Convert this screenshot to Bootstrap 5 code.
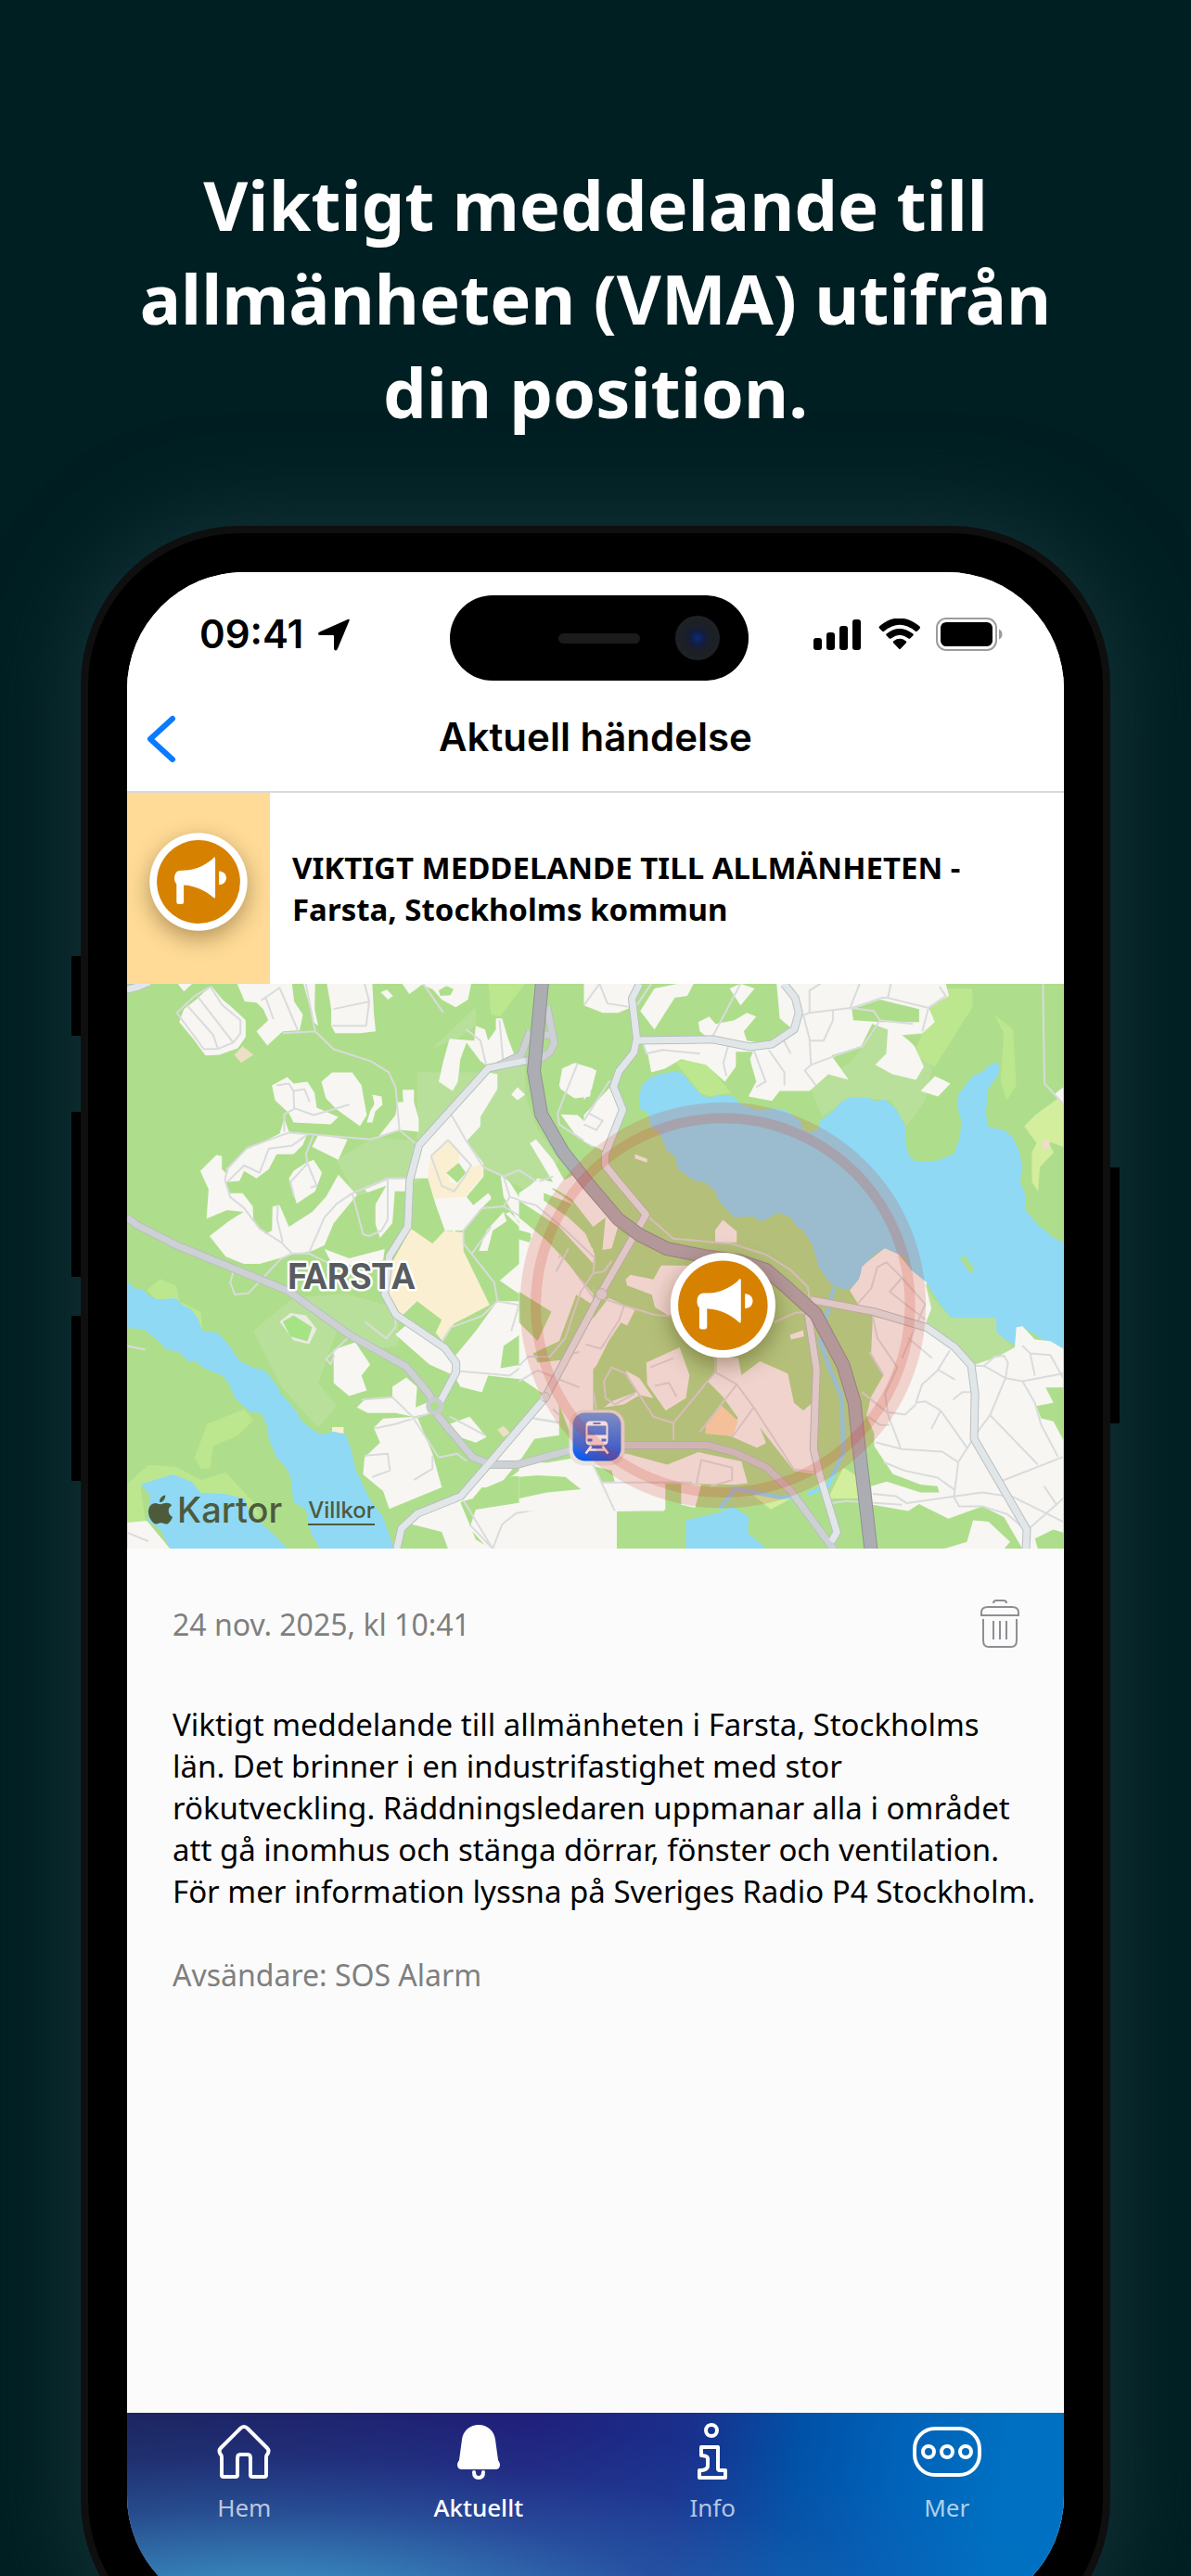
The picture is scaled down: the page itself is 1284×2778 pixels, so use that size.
<!DOCTYPE html>
<html lang="sv">
<head>
<meta charset="utf-8">
<meta name="viewport" content="width=device-width, initial-scale=1">
<title>Aktuell händelse</title>
<link href="https://cdn.jsdelivr.net/npm/bootstrap@5.3.0/dist/css/bootstrap.min.css" rel="stylesheet">
<style>
  body { background: #001f22; font-family: "Noto Sans", "Open Sans", sans-serif; color: #000; }
  .stage { min-height: 100vh; padding: 170px 87px 0; }
  .headline { font-size: 74px; line-height: 101px; font-weight: 700; margin-bottom: 94px; }
  .phone { background: #000; border: 8px solid #0f0f0f; border-radius: 172px; padding: 42px; margin-bottom: -90px; box-shadow: 0 0 90px 16px #123135; }
  .side-key { background: #000; width: 10px; }
  .key-a { left: -18px; top: 456px; height: 86px; }
  .key-b { left: -18px; top: 624px; height: 178px; }
  .key-c { left: -18px; top: 844px; height: 178px; }
  .key-d { right: -18px; top: 684px; height: 276px; }
  .screen { background: #fbfbfb; border-radius: 126px; }
  .ui-font { font-family: Inter, "Liberation Sans", sans-serif; font-weight: 600; font-size: 42px; line-height: 50px; }
  .status { height: 134px; padding: 0 66px 0 78px; background: #fff; }
  .island { top: 25px; width: 322px; height: 92px; border-radius: 46px; background: #000; padding: 0 31px 0 117px; margin-left: 4px; }
  .speaker { width: 88px; height: 11px; border-radius: 6px; background: #1b1b1b; }
  .lens { width: 48px; height: 48px; border-radius: 50%; background: radial-gradient(circle, #0c2a86 0, #141d3c 22%, #1c2026 45%, #202327 100%); }
  .titlebar { height: 104px; padding-bottom: 14px; border-bottom: 2px solid #d9d9d9; background: #fff; }
  .back { left: 14px; top: 14px; padding: 6px; color: #0a7aff; }
  .alert-row { min-height: 206px; background: #fff; }
  .alert-side { width: 154px; background: #ffdb97; padding-bottom: 14px; }
  .alert-title { font-size: 33px; line-height: 45px; font-weight: 700; padding: 0 24px; }
  .disc { filter: drop-shadow(0 8px 12px rgba(60, 40, 0, .4)); overflow: visible; }
  .map-mark { left: 22px; bottom: 20px; color: #4e5a3c; gap: 28px; font-family: Inter, "Liberation Sans", sans-serif; font-weight: 500; }
  .map-brand { font-size: 38px; line-height: 44px; }
  .map-terms { font-size: 24px; line-height: 28px; color: #4e5a3c; border-bottom: 2px solid #4e5a3c; text-decoration: none; margin-bottom: 5px; }
  .details { padding: 51px 25px 0 49px; }
  .stamp { font-size: 32px; line-height: 45px; color: #7f7f7f; }
  .date-row { margin-bottom: 56px; }
  .message { font-size: 33px; line-height: 45px; }
  .sender { margin-top: 45px; }
  .trash { color: #8e8e93; margin-right: 19px; padding: 4px; }
  .tabs { min-height: 216px; padding-top: 10px; background:
    radial-gradient(ellipse 85% 100% at 15% 100%, rgba(64,160,200,1) 0, rgba(58,145,198,.82) 22%, rgba(48,115,185,.5) 52%, rgba(40,90,170,.2) 78%, rgba(32,60,150,0) 100%),
    linear-gradient(100deg, #1d2660 0, #20217c 42%, #1a2f8c 58%, #0052a8 70%, #0062b8 80%, #0071c2 92%); }
  .tab-item { color: rgba(255,255,255,.7); text-decoration: none; font-size: 26px; line-height: 36px; gap: 10px; }
  .tab-item svg { color: #fff; }
  .tab-item.current { color: #fff; font-weight: 500; }
  .park { fill: #b9e09a; } .meadow { fill: #bce78f; } .built { fill: #f7f6f2; } .wood { fill: #aede8b; }
  .plaza { fill: #fbefd1; } .lake { fill: #8fd9f5; } .tan { fill: #ecdfc4; }
  .lane { fill: none; stroke: #d9dbdd; stroke-width: 2; stroke-linejoin: round; }
  .lane path { vector-effect: non-scaling-stroke; }
  .road { fill: none; stroke-linejoin: round; }
</style>
</head>
<body>
<svg width="0" height="0" class="position-absolute" aria-hidden="true">
  <symbol id="horn" viewBox="-170 -170 340 340">
    <circle r="169" fill="#fff"/><circle r="144" fill="#d68200"/>
    <path fill="#fff" d="M-61-39C-20-38 15-50 49-79 53-87 58-86 58-80V51C58 57 54 58 50 53 25 30-15 12-51 11V70Q-51 77-58 77H-69Q-76 77-76 70V8C-82 2-84-8-83-16-82-30-74-39-61-39ZM71-37C88-36 96-26 96-14 96-2 88 9 71 10Z"/>
  </symbol>
</svg>

<main class="stage d-flex flex-column overflow-hidden">
  <h1 class="headline text-white text-center">Viktigt meddelande till<br>allmänheten (VMA) utifrån<br>din position.</h1>

  <div class="phone position-relative flex-grow-1 d-flex flex-column">
    <span class="side-key key-a position-absolute"></span><span class="side-key key-b position-absolute"></span>
    <span class="side-key key-c position-absolute"></span><span class="side-key key-d position-absolute"></span>

    <div class="screen flex-grow-1 d-flex flex-column overflow-hidden">
      <header>
        <div class="status position-relative d-flex align-items-center justify-content-between">
          <div class="ui-font d-flex align-items-center gap-3">09:41
            <svg width="34" height="35" viewBox="0 0 34 35" aria-label="Plats"><path d="M32.500 .7Q34.300 .3 33.500 2.500L21 32.500Q20 35 18.500 34.500 17 34.300 17 32V19Q17 18 16 18H2.500Q0 18 0 16.500 0 15 2 14.200Z"/></svg>
          </div>
          <div class="island position-absolute start-50 translate-middle-x d-flex align-items-center justify-content-between"><span class="speaker"></span><span class="lens"></span></div>
          <div class="d-flex align-items-center gap-3">
            <svg width="54" height="34" viewBox="0 0 54 34" aria-label="Signal"><rect y="21" width="9" height="13" rx="3"/><rect x="14" y="15" width="9" height="19" rx="3"/><rect x="28" y="8" width="9" height="26" rx="3"/><rect x="42" y="1" width="9" height="33" rx="3"/></svg>
            <svg width="46" height="34" viewBox="0 0 46 34" aria-label="Wifi"><path d="M1.500 11Q-.3 9.500 1.500 8 22-9 44 8 45.700 9.500 44.500 11L42 13.500Q40.800 14.500 39.500 13.500 23 0 6.500 13.500 5 14.500 4 13.500ZM9 18.800Q7.500 17.500 9 16.300 22.500 5.500 37 16.300 38.500 17.500 37 18.800L34.500 21.300Q33.300 22.300 32 21.300 23 14 14 21.300 12.600 22.300 11.500 21.300ZM16.300 26.500Q15 25.200 16.500 24.200 23 19.500 29.500 24.200 31 25.200 29.700 26.500L24 32.500Q23 33.500 22 32.500Z"/></svg>
            <svg width="72" height="36" viewBox="0 0 72 36" aria-label="Batteri"><rect x="1" y="1" width="64" height="34" rx="10" fill="none" stroke="#9c9c9c" stroke-width="2"/><rect x="5" y="5" width="56" height="26" rx="6"/><path d="M68 12.500Q71.500 14 71.500 18T68 23.500Z" fill="#9c9c9c"/></svg>
          </div>
        </div>
        <nav class="titlebar position-relative d-flex align-items-center justify-content-center" aria-label="Titel">
          <button type="button" class="back btn border-0 position-absolute d-flex" aria-label="Tillbaka">
            <svg width="34" height="52" viewBox="0 0 34 52"><path d="M29 4 5 26 29 48" fill="none" stroke="currentColor" stroke-width="6" stroke-linecap="round" stroke-linejoin="round"/></svg>
          </button>
          <h2 class="ui-font mb-0">Aktuell händelse</h2>
        </nav>
      </header>

      <section class="alert-row d-flex align-items-stretch">
        <div class="alert-side d-flex align-items-center justify-content-center flex-shrink-0"><svg class="disc" width="106" height="106" aria-hidden="true"><use href="#horn"/></svg></div>
        <h3 class="alert-title mb-0 align-self-center">VIKTIGT MEDDELANDE TILL ALLMÄNHETEN -<br>Farsta, Stockholms kommun</h3>
      </section>

      <section class="position-relative">
        <svg class="d-block w-100" viewBox="0 0 1011 610" role="img" aria-label="Karta över Farsta">
          <rect width="1011" height="610" fill="#aede8b"/>

          <!-- western half: parks, lakes, blocks -->
          <g transform="matrix(.3333 0 0 .4018 -7 -11)">
            <path class="park" d="M960 265 1200 265 1310 240 1310 330 1350 420 1420 500 1350 600 1180 520 1120 450 960 560 760 600 700 500 820 440 960 450ZM430 960 560 870 730 860 900 900 900 1000 800 1010 700 960 640 1100 700 1160 640 1220 520 1110ZM1010 200 1150 90 1150 140 1080 180Z"/>
            <path class="meadow" d="M1190 27H1310L1260 80 1230 115 1200 110ZM85 850 130 820 180 840 190 880 260 910 265 960 200 940 120 880ZM240 1300 280 1210 400 1170 430 1200 380 1240 300 1270 290 1330 260 1330ZM22 1370 90 1320 180 1325 260 1360 340 1340 430 1420 450 1460 380 1430 260 1400 170 1350 65 1380 80 1470 22 1475Z"/>
            <path class="built" d="M190 130 205 95 245 70 270 50 295 35 330 70 360 90 405 125 405 170 380 200 320 218 275 220 235 175ZM185 27H232L205 48ZM377 27H555L562 75 590 110 580 152 525 155 475 193 440 155 478 125 462 95 440 78 402 75ZM592 27H630L628 95 640 140 625 130 608 75ZM668 27H815L820 105 826 155 775 160 695 160 682 140 682 95ZM842 50 862 43 882 60 866 70ZM912 27H1135L1125 70 1085 90 1040 70 1010 42 975 30 935 55Z"/>
            <path class="wood" d="M1030 45 1055 33 1078 42 1068 58 1035 60Z"/>
            <path class="built" d="M490 300 540 278 560 295 605 290 628 320 635 360 705 385 680 405 560 400 545 375 500 340ZM650 290 685 265 750 265 780 300 797 380 775 410 700 365 665 335ZM815 325 845 330 848 352 825 370 815 400 797 400 808 370 822 350ZM913 312H950V345L965 390V425L905 420 830 443 890 380 897 345 915 345ZM515 430 530 390 545 425 605 430 590 460 560 485 505 485 480 525 440 550 400 530 385 557 340 560 350 520 400 475 440 460ZM620 465 640 433 735 445 705 500ZM545 550 560 530 600 508 625 500 652 535 630 585 570 618ZM258 530 310 487 328 490V525L345 540 340 560 350 590 395 590 428 625 430 665 470 700 490 690 492 625 515 622 545 680 620 640 665 600 705 540 765 595 740 625 690 670 660 730 620 745 555 755 450 780 400 780 340 760 288 705 350 665 398 640 345 635 278 658 285 580ZM790 580 870 552 925 550 922 585 888 585 880 670 840 710 820 660 825 610ZM660 740 740 765 855 740 850 770 690 790Z"/>
            <path class="built" d="M1030 290 1045 235 1065 175 1145 180 1150 140 1180 150 1190 180 1215 150 1215 120 1235 120 1255 175 1278 225 1190 250 1165 235 1120 185 1100 230 1092 290 1075 315ZM1220 270V310L1165 385 1165 410 1120 450 1175 510V545L1120 600 1160 640 1190 590 1200 600 1110 690 1050 690 1020 620 995 550H945L970 460 1100 330 1190 265ZM1265 325 1285 305 1310 325 1285 340ZM690 1010 760 990 808 1050 780 1080 797 1120 740 1135 690 1100ZM765 1165 790 1145 880 1140 880 1110 925 1085 960 1110 955 1165 1000 1150 1010 1180 945 1190 890 1180 800 1180ZM820 1220 850 1195 960 1190 1010 1290 1040 1380 870 1438 850 1390 785 1345 790 1300 840 1260ZM22 1475 85 1470 160 1545H22ZM890 970 930 940 1010 990 1080 1030 1150 960 1220 880 1290 880 1310 960 1240 1000 1230 1060 1300 1050 1380 1010 1420 1100 1420 1240 1340 1250 1300 1300 1220 1380 1330 1310 1530 1330 1530 1390 1170 1380 1140 1410 1100 1420 1150 1520 1200 1545H1060L1040 1500 945 1480 920 1470 1100 1400 1200 1310 1300 1200 1370 1130 1300 1090 1190 1080 1170 1125 1100 1110 1080 1080 1000 1050ZM1065 1210 1130 1190 1185 1245 1150 1260 1080 1240ZM1150 1440 1530 1390V1545H1190L1130 1490Z"/>
            <path class="built" d="M1420 300 1430 255 1470 240 1530 255 1520 330 1470 335 1425 310ZM1425 378 1480 380 1530 420V465L1470 430ZM1325 455 1345 445 1400 500 1440 560 1370 590 1400 640 1530 740V1200L1460 1170 1290 860 1220 820 1290 770 1330 700 1260 640 1200 660 1160 750 1190 740 1200 700 1180 750 1160 740 1170 690 1240 640 1310 700 1240 600 1230 540 1260 560 1290 600 1350 550 1400 560Z"/>
            <path class="wood" d="M1350 670 1530 790V860L1450 780 1350 690ZM1370 590 1420 600 1530 690V740L1460 680ZM1290 850 1390 910 1340 1000 1300 940ZM1480 860 1520 890 1440 1050 1340 1050 1330 1030 1420 1000ZM1120 700 1240 640 1330 710 1290 780 1220 830 1110 720ZM760 600 860 570 825 620 825 680 790 730 850 735 760 760 670 730 700 660Z"/>
            <path class="built" d="M1160 745 1185 690 1240 640 1250 665 1205 690 1188 745ZM1100 650 1190 590 1200 605 1130 660 1070 700ZM1405 1125 1480 1115 1470 1135Z"/>
            <path class="plaza" d="M1005 485 1065 447 1100 475 1090 520 1060 530 1065 560 1090 565 1135 520 1172 510V545L1115 600 1015 605 995 545ZM940 685 1010 725 1050 690 1110 695V745L1195 890 1080 940 1040 985 1020 965 1040 930 960 880 910 920 865 860 870 790ZM685 1218H722V1235H685Z"/>
            <path class="tan" d="M368 218 395 195 430 218 390 240ZM1220 1225 1240 1215 1262 1235 1240 1245Z"/>
            <path class="wood" d="M1055 535 1095 508 1118 535 1090 562ZM1170 1385 1270 1350 1440 1352 1420 1378 1330 1395 1230 1412Z"/>
            <path d="M515 935 550 912 600 918 635 955 610 995 560 985Z" fill="#e9ebe6"/><path d="M525 935 560 918 620 950 605 988 550 975Z" fill="#a6e384"/>
            <path class="lake" d="M22 828 45 845 75 850 90 865 120 875 180 872 200 890 225 900 250 925 265 960 315 965 345 992 365 1015 385 1040 420 1055 470 1068 505 1105 520 1130 560 1165 585 1200 620 1225 650 1238 690 1230 730 1238 750 1290 760 1330 780 1365 805 1410 850 1460 885 1545H645L615 1500 600 1440 560 1420 550 1350 530 1320 505 1300 480 1250 475 1215 455 1180 420 1178 370 1140 350 1100 330 1080 270 1060 240 1040 220 1042 185 1015 150 1010 120 985 75 955 22 952Z"/>
            <path class="lake" d="M65 1372 110 1360 170 1345 230 1365 260 1395 340 1398 400 1410 420 1450 500 1510 540 1545H160L130 1495 90 1470 95 1400Z"/>
            <g class="lane">
              <path d="M290 35 330 85 388 125V160L365 185 315 202 270 203 182 105 240 60 290 35M215 85 300 165 315 202M250 62 365 185M455 72 515 38 575 155M470 65 495 122M600 27 630 155 690 203 810 235 868 265 890 305 903 420 810 445 625 432 545 427 410 468 345 525 338 555 355 600 400 630 450 685 520 722 555 752 610 752 680 780M525 160 630 155M690 95 805 75 790 27M685 140H795L805 75M530 425V378L565 362 625 380 740 352M505 300 545 295 560 315 562 362M560 315 595 310 612 345M345 560 400 515 450 535 480 470 555 462 605 432M625 432 600 485 605 510 550 560 562 600M605 510 635 570 615 575M510 620 507 660 525 722M610 750 660 655 700 618 750 590 865 550H925M865 550V660L845 690 805 705 785 700 750 590M903 420 960 460M555 752 520 765 415 858 370 862 355 830 365 800M790 935 860 980 890 950V915M740 975 665 1035 680 1050 692 1025M780 1145 880 1138 945 1190 1030 1300 1090 1290 1120 1310M820 1222 890 1210 1005 1180M790 1295 865 1290 872 1335 815 1352M950 1360 1010 1330V1295M22 1000 80 1010M22 1502 90 1525M1120 150 1165 180 1185 250M1227 125 1240 250M1070 378 1120 450 1175 520 1240 545 1290 528 1350 560 1400 545M1005 490 1060 447 1135 515 1110 550 1080 585 1040 570 1005 490M1240 545 1260 600 1240 625 1170 630 1110 690V725L1210 830 1220 880 1170 920 1070 950 1040 990M1240 625 1330 670 1430 750 1530 870M1260 600 1340 620 1460 700 1530 780M1135 755 1200 680M1220 880 1290 890 1265 960M1100 1068 1260 1080 1340 1030 1430 1025 1530 1010M1385 800 1440 740M1480 240 1415 375 1420 405 1530 465M980 27 1045 105M1130 1480 1205 1545 1235 1480 1280 1450 1440 1425 1530 1440M1110 1415 1205 1545M1340 1195 1420 1205M1065 1190 1180 1240"/>
            </g>
          </g>

          <!-- northern suburbs and the eastern shore -->
          <g transform="matrix(.3381 0 0 .4018 493 -11)">
            <path class="park" d="M720 300 850 240 940 140 1060 60 1090 200 1110 260 1090 340 1030 410 980 340 850 332 760 385Z"/>
            <path class="meadow" d="M1090 90 1160 40H1240V90L1120 250 1060 220ZM1310 110 1370 150 1380 300 1350 340 1330 290 1340 160ZM290 235 380 230 440 290 470 320 400 330 370 320Z"/>
            <path d="M1405 410 1440 380 1530 325V465L1480 450 1500 480 1455 520 1450 585 1430 560 1430 480 1445 455Z" fill="#d3ee9d"/>
            <path class="built" d="M0 27H170L150 90 110 105 60 105 0 85ZM180 100 225 40 300 27H350L330 60 290 65 225 150ZM465 40 500 27 545 40 500 85ZM365 130 400 115 420 135 480 125 520 105 550 115 510 155 520 180 595 190 660 145 625 120 615 27H1155L1165 60 1100 90 1120 130 1080 160 1020 165 1055 195 1085 250 1060 285 985 270 930 245 965 215 970 150 920 135 885 195 790 220 845 285 780 270 720 315 625 315 600 342 525 330 550 290 530 230 540 210 485 210V250L450 290 390 245 310 230 260 255 215 265 205 220 190 190 170 175 400 175 370 155ZM1075 315 1120 275 1170 295 1130 330ZM0 250 40 260 25 310 0 340Z"/>
            <path class="built" d="M0 380 100 290 125 370 80 450 60 475 0 450ZM1500 325 1530 305V350ZM0 1370H260V1440L105 1445V1545H0Z"/>
            <path class="wood" d="M855 95 945 70 1070 95V130H950L860 125ZM1015 165 1080 165 1060 195Z"/>
            <path class="lake" d="M175 330 185 300 205 283 240 270 290 262 320 270 340 295 375 325 400 335 430 325 475 330 500 350 560 368 600 362 640 365 665 380 690 395 700 420 720 428 750 415 755 395 800 365 820 345 850 332 910 333 930 343 960 338 985 355 1005 375 1025 410 1030 470 1045 500 1075 505 1110 505 1140 498 1180 485 1200 440 1205 395 1192 360 1195 325 1240 275 1275 262 1300 243 1320 237 1328 260 1312 285 1290 310 1283 375 1292 412 1340 420 1370 440 1390 480 1400 520 1392 560 1410 595V635L1450 675 1500 710 1530 722V1005L1490 992 1460 980 1400 950 1380 1000 1320 970 1310 930H1175L1130 880 1090 825 1045 800 1020 760 960 738 920 760 885 800 880 835 830 850 790 835 750 790 730 730 700 690 680 680 660 655 620 642 570 665 535 652 480 655 430 610 420 585 390 562 350 555 300 525 290 490 265 475 240 425 215 415 205 375 178 362Z"/>
            <path class="wood" d="M1200 765 1215 757 1247 795 1235 805Z"/><path class="tan" d="M1460 450 1485 445 1488 470 1465 475Z"/>
            <g class="lane">
              <path d="M0 85 50 27 75 80 150 90M165 90 215 27M410 170 500 27M190 190 200 215 250 205 370 215M460 195 445 240 455 275M540 200 580 290 550 305M590 205 640 265V300M700 110 720 175 725 245 705 260 740 300M725 245 820 215 890 195 945 125 925 100 850 92 720 105 690 115M720 180H765L795 125V95M720 105V45L755 27M850 92 880 27M855 92 950 65 970 65 980 27M970 65 1100 92 1155 60 1135 35M945 125 1050 135M1100 92 1080 155M635 175 660 215M1465 27 1470 295 1530 350M0 395 80 290 100 290M15 375 60 395 40 420 0 405"/>
            </g>
          </g>

          <!-- town centre inside the warning zone -->
          <g transform="translate(423 119) scale(.3333)">
            <path class="built" d="M0 320 60 280 110 310 170 350 245 520 235 565 140 480 0 440ZM180 260 320 430 300 500 270 505 280 400 240 430 170 340 105 300ZM375 195 415 210V222L375 208ZM635 480V440L660 407 705 445V480ZM0 470 100 500 210 620 180 740 140 860 180 880 230 740 290 660 375 700 350 750 330 740 290 800 250 880 200 930 200 1000 250 1100 170 1110 120 980 0 900ZM345 600 360 585 435 600 460 555 560 555V715L480 715 440 690 430 650 350 620ZM412 870 520 820 552 910 540 985 475 1025 450 990 415 940ZM345 895 390 920 435 985 390 975 340 1005 275 1015 300 995 380 965ZM640 850 710 855 720 910 780 865 870 905 890 1000 920 1025 950 1000 955 1230 890 1220 780 1080 800 1130 770 1145 690 1110 640 1095 710 1050 660 980 610 930 640 900ZM877 780 920 765 922 785 880 795ZM350 1165 480 1200 580 1160 720 1190 740 1260 700 1265 470 1260 470 1350H0V1210L170 1180ZM580 1265H590L570 1340 525 1330V1262ZM1075 630 1100 600 1120 550 1185 500 1230 520 1270 570 1320 610V760L1240 740 1110 700Z"/>
            <path class="wood" d="M0 1240 60 1235 150 1240 200 1280 90 1290 0 1310ZM240 1205 300 1220 310 1255 270 1258ZM80 320 170 355 250 450 235 470 160 400 80 345ZM0 345 130 430 250 560 270 640 200 600 120 500 0 400ZM0 640 105 705 60 800 0 740ZM185 650 235 680 150 860 60 870 45 840 130 800Z"/>
            <path d="M605 1075 655 1008 710 1060 690 1108 603 1100Z" fill="#fbdfb4"/>
            <path d="M1000 1310 1050 1210 1100 1240 1105 1310ZM760 1300 900 1300 815 1345Z" fill="#d3ee9d"/>
            <g class="lane">
              <path d="M410 390 500 468 690 485 800 520 880 570 935 625 940 660M265 660 340 685 440 715 560 725M120 575 160 500M0 345 55 360 150 440 245 530 240 580 275 575 300 540M240 580 200 640 150 790 100 850H30L0 880M340 685 325 730 265 825 215 810M195 950 60 895 0 930M825 740 895 708H930M425 885 500 855M440 945 485 935 510 980M635 850V900L500 1065V1120M500 1065 435 1045 345 905 300 885 275 930 280 985 310 1005 375 970M635 900 705 940 760 1015 890 1215 960 1225M585 1095 705 940M690 1110 760 1015M240 965 250 1020M45 1050 130 1065M575 1260 590 1185 690 1210V1250L620 1270M270 1258H560M235 1190 310 1350M1095 665 1140 620 1160 560 1200 550 1250 610M1200 640 1250 610M1200 640 1320 740M1145 715 1160 790 1230 880 1190 960 1210 1050M110 1020 130 1040"/>
            </g>
          </g>

          <!-- south-eastern suburb and streams -->
          <g transform="translate(603 239) scale(.3333)">
            <path class="park" d="M775 250 800 300 860 365H1005V410L1065 465 1030 490 925 520 870 460 780 395Z"/>
            <path class="built" d="M605 360 780 395 870 460 925 520 1010 490 1065 460 1070 395 1090 392 1130 435 1180 440 1222 465V590H1165L1190 640 1135 650 1150 690 1190 700 1222 760V1060L1190 1050 1130 1080 1140 1113H1090L1030 1010 960 975 850 1015 755 968 720 990 605 970 600 910 650 895 760 930 820 930 815 910 760 905 670 870 610 780 610 740 585 680 600 620 640 550 600 480ZM530 275 560 255 570 200 640 142 690 160 730 220 775 250 795 335 775 385 600 345 555 315ZM835 1113 910 1090 930 1020 980 1025 1050 1090 1030 1113Z"/>
            <path class="lake" d="M0 1020 110 995 150 975 205 1010 200 1060 260 1113H0Z"/>
            <path d="M480 265 460 340 435 440 470 540 505 620 510 800 460 910 395 935M110 985 160 918 300 945 370 945" fill="none" stroke="#8fd9f5" stroke-width="14"/>
            <g class="lane">
              <path d="M555 320 600 270 620 200 650 185 700 235 775 320 700 495M700 235 660 280 775 370M720 430 797 495M605 360 620 430 685 525 645 610 655 680 695 785M595 475 640 550M855 470 815 535 765 580 745 640 775 635 825 665 795 725M820 535 872 565M825 665 910 785M570 605 650 670 710 678 745 645M865 630 895 605H930M590 685 630 712H660M615 768 700 790 830 798 882 832 925 765M882 832 868 945 885 975 960 975 1040 1000 1100 1050M640 832 710 860 815 882 868 920M605 935 680 942 715 965 960 930 1060 945 1222 1025M470 965 520 958 700 970M925 520H965L1000 490 1030 487 1043 510 1035 560 985 680 940 740M965 520 1035 560 1090 570 1222 545M1090 455 1115 480 1180 485 1222 560M1115 480 1130 552M1090 570 1130 640 1150 710 1205 815M985 680 1140 840M1025 892 1222 815M1110 1048 1222 950M1160 910 1200 970"/>
            </g>
          </g>

          <!-- main roads -->
          <g class="road" stroke="#b9bec1" stroke-width="9">
            <path id="r1" d="M430 83 390 91 315 174 305 212 303 262 283 294 278 335 290 357 343 393 355 409V419L338 451M553 0 545 16 550 59 547 74 531 94 525 111 535 136 516 184V196L533 217 560 249 513 331 451 447 393 515 360 553 313 572 296 588 291 610M552 61 632 60 672 68 696 65 720 49 725 31 721 15 709 0M738 341 806 354 863 371 893 392 911 412 915 442 914 491 971 589 970 610M735 357 744 416 741 502 748 532 766 592 760 602M0 6 12 3 24-2"/>
            <path id="r2" d="M0 252 10 260 53 282 173 331 240 379 301 413 326 443 336 467 373 511 393 519H421L480 503 536 498H626L656 506 690 522 716 547 763 611M453 24 461 64 456 74 446 81 425 84M435 51 425 77 400 89M446 55H458"/>
          </g>
          <g class="road" stroke="#e1e7e8" stroke-width="7"><use href="#r1"/></g>
          <g class="road" stroke="#cdd1d3" stroke-width="7"><use href="#r2"/></g>
          <use href="#r1" class="road" stroke="#e1e7e8" stroke-width="6"/>
          <circle cx="332" cy="456" r="7" fill="#aede8b" stroke="#c7ccce" stroke-width="5"/><circle cx="451" cy="446" r="5" fill="#dfe3e4" stroke="#bfc4c7"/><circle cx="512" cy="335" r="6" fill="#dfe3e4" stroke="#bfc4c7"/>
          <path class="road" d="M448-3 439 94 447 141 470 181 496 214 530 254 553 271 583 286 623 294 660 299 690 309 710 326 743 356 773 412 785 452 790 502 798 569 803 613" stroke="#8f9094" stroke-width="15"/>
          <path class="road" d="M448-3 439 94 447 141 470 181 496 214 530 254 553 271 583 286 623 294 660 299 690 309 710 326 743 356 773 412 785 452 790 502 798 569 803 613" stroke="#acadb2" stroke-width="13"/>

          <text x="242" y="329" text-anchor="middle" font-family="Roboto, sans-serif" font-weight="700" font-size="38" fill="#585c5e" stroke="#fff" stroke-width="5" stroke-linejoin="round" paint-order="stroke">FARSTA</text>

          <!-- railway station -->
          <g>
            <rect x="477" y="460" width="60" height="60" rx="16" fill="#e9e4e0"/>
            <linearGradient id="st" x2="0" y2="1"><stop stop-color="#6e9fe6"/><stop offset="1" stop-color="#0d55ea"/></linearGradient>
            <rect x="481" y="463" width="52" height="52" rx="13" fill="url(#st)"/>
            <path fill="#fff" fill-rule="evenodd" d="M500 472H514Q519 472 519 478V493Q519 498 514 498H500Q495 498 495 493V478Q495 472 500 472ZM497 477V487H517V477ZM503 473.500V475.500H511V473.500ZM497 491V494H502V491ZM512 491V494H517V491Z"/>
            <path d="M501 499 495 507M513 499 519 507M498 503H516" stroke="#fff" stroke-width="2.500"/>
          </g>

          <circle cx="643" cy="347" r="219" fill="#d53525" fill-opacity=".18"/>
          <circle cx="643" cy="347" r="202" fill="none" stroke="#d83020" stroke-opacity=".18" stroke-width="11"/>
          <use class="disc" href="#horn" x="586" y="290" width="114" height="114"/>
        </svg>
        <div class="map-mark position-absolute d-flex align-items-end">
          <span class="map-brand d-flex align-items-center gap-1">
            <svg width="28" height="34" viewBox="0 0 32 36" aria-hidden="true"><path fill="currentColor" d="M22 0Q22.500 4 20 6.500T15 9Q14.500 5 17 2.700 19.300.4 22 0ZM30 12.500Q25.500 15.500 26 20 26.500 25 31 27 29 32.500 25.500 35 23.500 36.500 21 35.300 16.500 33.500 12.500 35.300 10 36.500 7.500 34.500 1.500 29 1 20.500 1.300 13 7 10.500 10 9.300 13 10.800 16 12 19 10.600 26 8.300 30 12.500Z"/></svg>Kartor</span>
          <a class="map-terms" href="#villkor">Villkor</a>
        </div>
      </section>

      <section class="details flex-grow-1">
        <div class="date-row d-flex justify-content-between align-items-center">
          <time class="stamp" datetime="2025-11-24T10:41">24 nov. 2025, kl 10:41</time>
          <button type="button" class="trash btn border-0 d-flex" aria-label="Ta bort">
            <svg width="42" height="52" viewBox="0 0 42 52" fill="none" stroke="currentColor" stroke-width="2"><path d="M14 4Q14 1 17 1H25Q28 1 28 4M1 17V14Q1 8 8 8H34Q41 8 41 14V17ZM3 21V44Q3 51 9 51H33Q39 51 39 44V21M14 23V43M21 23V43M28 23V43"/></svg>
          </button>
        </div>
        <p class="message mb-0">Viktigt meddelande till allmänheten i Farsta, Stockholms<br>län. Det brinner i en industrifastighet med stor<br>rökutveckling. Räddningsledaren uppmanar alla i området<br>att gå inomhus och stänga dörrar, fönster och ventilation.<br>För mer information lyssna på Sveriges Radio P4 Stockholm.</p>
        <p class="stamp sender mb-0">Avsändare: SOS Alarm</p>
      </section>

      <nav class="tabs d-flex" aria-label="Huvudmeny">
        <a href="#hem" class="tab-item col d-flex flex-column align-items-center">
          <svg width="58" height="64" viewBox="0 0 58 64" fill="none" stroke="currentColor" stroke-width="4" stroke-linejoin="round"><path d="M25 7Q29 3 33 7L54 28Q57 31 54 35 53 36 53 38V57Q53 59 51 59H38Q36 59 36 57V39Q36 35 33 35H25Q22 35 22 39V57Q22 59 20 59H7Q5 59 5 57V38Q5 36 4 35 1 31 4 28Z"/></svg>Hem</a>
        <a href="#aktuellt" class="tab-item current col d-flex flex-column align-items-center" aria-current="page">
          <svg width="48" height="64" viewBox="0 0 48 64"><path d="M24 3C34 3 41 10 42 19L45 41Q47 44 47 46 47 51 42 51H6Q1 51 1 46 1 44 3 41L6 19C7 10 14 3 24 3Z" fill="currentColor"/><path d="M19 54Q19 60 24 60T29 54" fill="none" stroke="currentColor" stroke-width="4" stroke-linecap="round"/></svg>Aktuellt</a>
        <a href="#info" class="tab-item col d-flex flex-column align-items-center">
          <svg width="34" height="64" viewBox="0 0 34 64" fill="none" stroke="currentColor" stroke-width="4" stroke-linejoin="round"><circle cx="16" cy="9" r="6"/><path d="M5 27H23V50Q23 52 25 52H31V60H3V52H6Q12 51 12 47V39Q11 36 5 36Z"/></svg>Info</a>
        <a href="#mer" class="tab-item col d-flex flex-column align-items-center">
          <svg width="76" height="64" viewBox="0 0 76 64" fill="none" stroke="currentColor" stroke-width="4"><rect x="3" y="7" width="70" height="50" rx="22"/><circle cx="18" cy="32" r="6"/><circle cx="38" cy="32" r="6"/><circle cx="58" cy="32" r="6"/></svg>Mer</a>
      </nav>
    </div>
  </div>
</main>
<script src="https://cdn.jsdelivr.net/npm/bootstrap@5.3.0/dist/js/bootstrap.bundle.min.js"></script>
</body>
</html>
